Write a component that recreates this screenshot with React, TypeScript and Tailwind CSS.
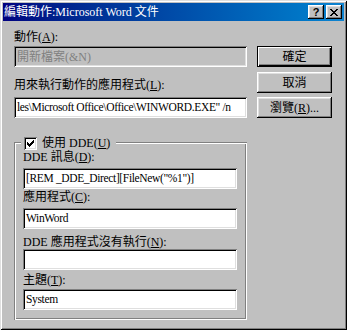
const FONT = "font-['Liberation_Serif','Noto_Sans_CJK_TC',serif]";

const BTN =
  'shadow-[inset_-1px_-1px_#000,inset_1px_1px_#fff,inset_-2px_-2px_#808080,inset_2px_2px_#dfdfdf]';
const EDIT =
  'shadow-[inset_1px_1px_#808080,inset_-1px_-1px_#fff,inset_2px_2px_#000,inset_-2px_-2px_#dfdfdf]';

function Field({ value, disabled }: { value: string; disabled?: boolean }) {
  return (
    <div
      className={`h-[21px] flex items-center pl-[3px] pr-[2px] overflow-hidden whitespace-nowrap ${EDIT} ${
        disabled ? 'bg-[#c0c0c0] text-[#808080] text-[12px]' : 'bg-white text-black text-[11.5px] tracking-[-0.35px]'
      }`}
    >
      {value}
    </div>
  );
}

function Label({ text, hot, className = '' }: { text: string; hot: string; className?: string }) {
  return (
    <div className={`h-[13px] leading-[13px] text-[12px] text-black whitespace-nowrap ${className}`}>
      {text}(<u>{hot}</u>):
    </div>
  );
}

function Button({ children, def, className = '' }: { children: React.ReactNode; def?: boolean; className?: string }) {
  return (
    <div
      className={`h-[21px] w-[75px] flex items-center justify-center text-[12px] text-black bg-[#c0c0c0] ${
        def
          ? 'border border-black shadow-[inset_1px_1px_#fff,inset_-1px_-1px_#000,inset_-2px_-2px_#808080]'
          : BTN
      } ${className}`}
    >
      {children}
    </div>
  );
}

export default function App() {
  return (
    <div
      className={`${FONT} w-[347px] h-[330px] bg-[#c0c0c0] p-[3px] shadow-[inset_1px_1px_#dfdfdf,inset_-1px_-1px_#000,inset_2px_2px_#fff,inset_-2px_-2px_#808080]`}
    >
      {/* title bar */}
      <div className="h-[18px] flex items-center justify-between pl-[1px] pr-[2px] bg-linear-to-r from-[#000080] to-[#1084d0]">
        <span className="text-white text-[12px] leading-[18px] whitespace-nowrap">
          編輯動作:Microsoft Word 文件
        </span>
        <div className="flex gap-[2px]">
          <div className={`w-[16px] h-[14px] bg-[#c0c0c0] flex items-center justify-center ${BTN}`}>
            <span className="font-['Liberation_Sans',sans-serif] font-bold text-[11px] leading-none text-black mt-[1px]">
              ?
            </span>
          </div>
          <div className={`w-[16px] h-[14px] bg-[#c0c0c0] flex items-center justify-center ${BTN}`}>
            <svg width="8" height="7" viewBox="0 0 8 7" shapeRendering="crispEdges">
              <path d="M0 0h2v1h1v1h2V1h1V0h2v1H7v1H6v1H5v1h1v1h1v1h1v1H6V6H5V5H3v1H2v1H0V6h1V5h1V4h1V3H2V2H1V1H0z" fill="#000" />
            </svg>
          </div>
        </div>
      </div>

      <div className="flex pl-[11px]">
        {/* left column */}
        <div className="w-[233px]">
          <Label text="動作" hot="A" className="mt-[10px]" />
          <div className="mt-[2px]">
            <Field value="開新檔案(&N)" disabled />
          </div>
          <Label text="用來執行動作的應用程式" hot="L" className="mt-[12px]" />
          <div className="mt-[5px]">
            <Field value={'les\\Microsoft Office\\Office\\WINWORD.EXE" /n'} />
          </div>

          {/* DDE group */}
          <div className="relative mt-[24px] pt-[9px] pl-[9px] pr-[10px] pb-[10px] shadow-[inset_1px_1px_#808080,inset_-1px_-1px_#fff,inset_2px_2px_#fff,inset_-2px_-2px_#808080]">
            <div className="absolute left-[7px] top-[-5px] h-[13px] flex items-center gap-[5px] pl-[3px] pr-[6px] bg-[#c0c0c0]">
              <div className={`w-[13px] h-[13px] bg-white flex items-center justify-center ${EDIT}`}>
                <svg width="7" height="7" viewBox="0 0 7 7" shapeRendering="crispEdges">
                  <path d="M6 0h1v3H6v1H5v1H4v1H3v1H2V6H1V5H0V2h1v1h1v1h1V3h1V2h1V1h1z" fill="#000" />
                </svg>
              </div>
              <span className="text-[12px] leading-[13px] text-black whitespace-nowrap">
                使用 DDE(<u>U</u>)
              </span>
            </div>

            <Label text="DDE 訊息" hot="D" />
            <div className="mt-[4px]">
              <Field value={'[REM _DDE_Direct][FileNew("%1")]'} />
            </div>
            <Label text="應用程式" hot="C" className="mt-[2px]" />
            <div className="mt-[4px]">
              <Field value="WinWord" />
            </div>
            <Label text="DDE 應用程式沒有執行" hot="N" className="mt-[7px]" />
            <div>
              <Field value="" />
            </div>
            <Label text="主題" hot="T" className="mt-[4px]" />
            <div className="mt-[2px]">
              <Field value="System" />
            </div>
          </div>
        </div>

        {/* buttons */}
        <div className="ml-[10px] mt-[25px] flex flex-col">
          <Button def>確定</Button>
          <Button className="mt-[5px]">取消</Button>
          <Button className="mt-[4px]">
            瀏覽(<u>R</u>)...
          </Button>
        </div>
      </div>
    </div>
  );
}
